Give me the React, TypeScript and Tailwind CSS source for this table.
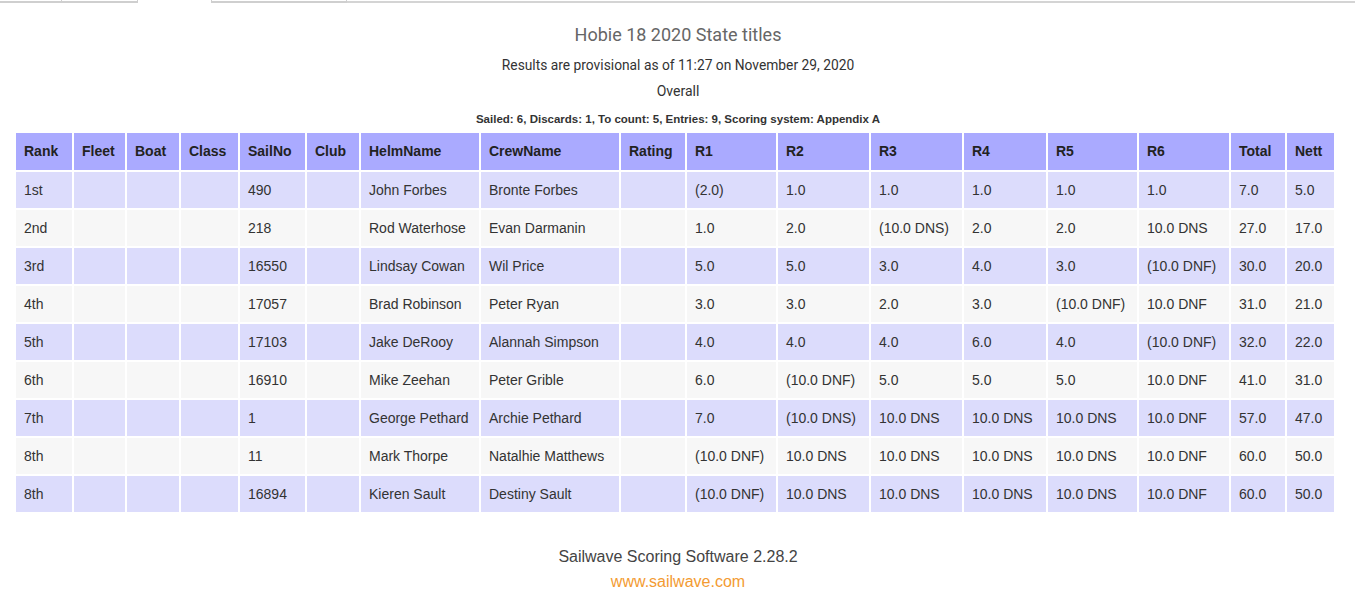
const headers = [
  "Rank", "Fleet", "Boat", "Class", "SailNo", "Club", "HelmName", "CrewName", "Rating",
  "R1", "R2", "R3", "R4", "R5", "R6", "Total", "Nett",
];

const widths = [58, 53, 54, 59, 67, 54, 120, 140, 66, 91, 93, 93, 84, 91, 92, 56, 49];

const rows: string[][] = [
  ["1st", "", "", "", "490", "", "John Forbes", "Bronte Forbes", "", "(2.0)", "1.0", "1.0", "1.0", "1.0", "1.0", "7.0", "5.0"],
  ["2nd", "", "", "", "218", "", "Rod Waterhose", "Evan Darmanin", "", "1.0", "2.0", "(10.0 DNS)", "2.0", "2.0", "10.0 DNS", "27.0", "17.0"],
  ["3rd", "", "", "", "16550", "", "Lindsay Cowan", "Wil Price", "", "5.0", "5.0", "3.0", "4.0", "3.0", "(10.0 DNF)", "30.0", "20.0"],
  ["4th", "", "", "", "17057", "", "Brad Robinson", "Peter Ryan", "", "3.0", "3.0", "2.0", "3.0", "(10.0 DNF)", "10.0 DNF", "31.0", "21.0"],
  ["5th", "", "", "", "17103", "", "Jake DeRooy", "Alannah Simpson", "", "4.0", "4.0", "4.0", "6.0", "4.0", "(10.0 DNF)", "32.0", "22.0"],
  ["6th", "", "", "", "16910", "", "Mike Zeehan", "Peter Grible", "", "6.0", "(10.0 DNF)", "5.0", "5.0", "5.0", "10.0 DNF", "41.0", "31.0"],
  ["7th", "", "", "", "1", "", "George Pethard", "Archie Pethard", "", "7.0", "(10.0 DNS)", "10.0 DNS", "10.0 DNS", "10.0 DNS", "10.0 DNF", "57.0", "47.0"],
  ["8th", "", "", "", "11", "", "Mark Thorpe", "Natalhie Matthews", "", "(10.0 DNF)", "10.0 DNS", "10.0 DNS", "10.0 DNS", "10.0 DNS", "10.0 DNF", "60.0", "50.0"],
  ["8th", "", "", "", "16894", "", "Kieren Sault", "Destiny Sault", "", "(10.0 DNF)", "10.0 DNS", "10.0 DNS", "10.0 DNS", "10.0 DNS", "10.0 DNF", "60.0", "50.0"],
];

export default function App() {
  return (
    <div className="min-h-[590px] bg-white font-['Liberation_Sans',Arial,sans-serif] text-[#333]">
      {/* cut-off tab strip at the very top */}
      <div className="flex h-[3px]">
        <div className="w-[62px] border-b-2 border-r border-[#cfcfcf]" />
        <div className="w-[76px] border-b-2 border-r border-[#cfcfcf]" />
        <div className="w-[74px] border-r border-[#cfcfcf]" />
        <div className="w-[135px] border-b-2 border-r border-[#cfcfcf]" />
        <div className="w-[1008px] border-b-2 border-[#d4d4d4]" />
      </div>

      <div className="text-center font-['Roboto',sans-serif]">
        <h1 className="mt-[20px] text-[18px] leading-[24px] text-[#666]">Hobie 18 2020 State titles</h1>
        <p className="mt-[8px] text-[13.8px] leading-[20px] text-[#333]">
          Results are provisional as of 11:27 on November 29, 2020
        </p>
        <p className="mt-[6px] text-[14px] leading-[20px] text-[#333]">Overall</p>
      </div>
      <p className="mt-[10px] text-center text-[11.5px] font-bold leading-[16px] text-[#333]">
        Sailed: 6, Discards: 1, To count: 5, Entries: 9, Scoring system: Appendix A
      </p>

      <table className="mt-[4px] ml-[14px] w-[1320px] table-fixed border-collapse text-[14px]">
        <colgroup>
          {widths.map((w, i) => (
            <col key={i} style={{ width: w }} />
          ))}
        </colgroup>
        <thead>
          <tr>
            {headers.map((h) => (
              <th
                key={h}
                className="h-[39px] border-2 border-white bg-[#aaaaff] pl-[8px] text-left font-bold text-[#222]"
              >
                {h}
              </th>
            ))}
          </tr>
        </thead>
        <tbody>
          {rows.map((r, i) => (
            <tr key={i} className={i % 2 === 0 ? "bg-[#dcdcfc]" : "bg-[#f7f7f7]"}>
              {r.map((c, j) => (
                <td key={j} className="h-[38px] border-2 border-white pl-[8px] whitespace-nowrap text-[#333]">
                  {c}
                </td>
              ))}
            </tr>
          ))}
        </tbody>
      </table>

      <div className="mt-[33px] text-center text-[16px] leading-[20px]">
        <p className="text-[#444]">Sailwave Scoring Software 2.28.2</p>
        <p className="mt-[5px] text-[#f39b32]">www.sailwave.com</p>
      </div>
    </div>
  );
}
